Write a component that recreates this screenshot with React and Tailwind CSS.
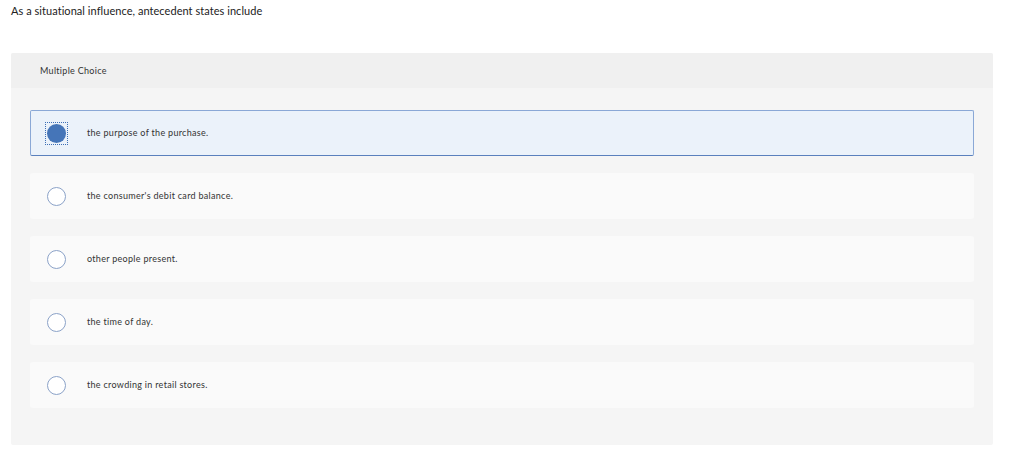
import React, { useState } from 'react';

const options = [
    'the purpose of the purchase.',
    "the consumer's debit card balance.",
    'other people present.',
    'the time of day.',
    'the crowding in retail stores.',
];

export default function App() {
    const [selected, setSelected] = useState(0);

    return (
        <div className="w-[1024px] h-[476px] bg-white text-[#222] font-['Lato','Liberation_Sans',sans-serif] overflow-hidden">
            <p className="pl-[11px] pt-[4px] text-[11px] leading-[14px] tracking-[0.05px]">
                As a situational influence, antecedent states include
            </p>

            <div className="ml-[11px] mt-[35px] w-[982px] h-[392px] bg-[#f5f5f5] rounded-[2px]">
                <div className="h-[35px] bg-[#f0f0f0] flex items-center pl-[29px] text-[9px] tracking-[0.3px] text-[#333] rounded-t-[2px]">
                    Multiple Choice
                </div>

                <div className="pt-[22px] px-[19px] flex flex-col gap-[17px]">
                    {options.map((opt, i) => {
                        const isSel = selected === i;
                        return (
                            <button
                                key={i}
                                onClick={() => setSelected(i)}
                                className={
                                    isSel
                                        ? 'h-[46px] w-[944px] flex items-center text-left rounded-[2px] bg-[#ebf2fa] border border-[#8aa8d6] border-b-[#5a80bd]'
                                        : 'h-[46px] w-[944px] flex items-center text-left rounded-[3px] bg-[#fafafa] border border-transparent'
                                }
                            >
                                <span className="w-[50px] flex justify-center shrink-0">
                                    {isSel ? (
                                        <span className="w-[23px] h-[23px] border-[1.5px] border-dotted border-[#3d6fb6] flex items-center justify-center">
                                            <span className="w-[19px] h-[19px] rounded-full bg-[#4575b8]" />
                                        </span>
                                    ) : (
                                        <span className="w-[19px] h-[19px] rounded-full border border-[#8ba2c8] bg-white" />
                                    )}
                                </span>
                                <span className="text-[9px] tracking-[0.3px] text-[#333] pl-[6px]">{opt}</span>
                            </button>
                        );
                    })}
                </div>
            </div>
        </div>
    );
}
